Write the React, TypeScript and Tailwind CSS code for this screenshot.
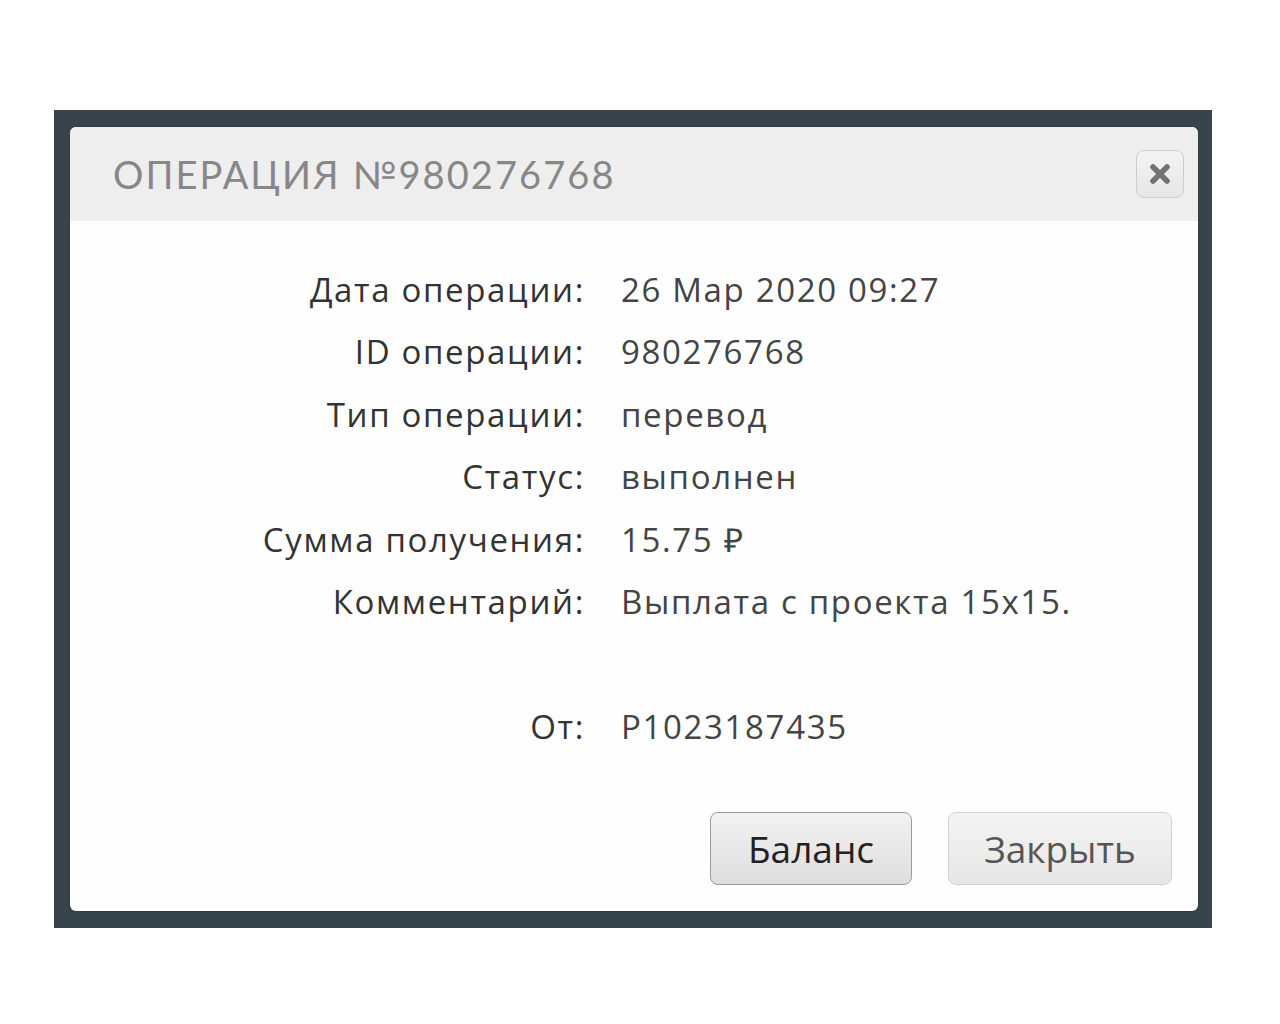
import React from "react";

const rows: { label: string; value: React.ReactNode }[] = [
  { label: "Дата операции:", value: "26 Мар 2020 09:27" },
  { label: "ID операции:", value: "980276768" },
  { label: "Тип операции:", value: "перевод" },
  { label: "Статус:", value: "выполнен" },
  { label: "Сумма получения:", value: "15.75 ₽" },
  { label: "Комментарий:", value: "Выплата с проекта 15x15." },
];

function Row({ label, value }: { label: string; value: React.ReactNode }) {
  return (
    <div className="flex h-[62.5px] items-center">
      <div className="w-[515px] shrink-0 text-right text-[#333]">{label}</div>
      <div className="pl-[36px] text-[#444]">{value}</div>
    </div>
  );
}

export default function App() {
  return (
    <div className="min-h-[1024px] bg-white pt-[110px] pl-[54px]">
      <div className="h-[818px] w-[1158px] bg-[#37444b] px-[16px] pt-[17px]">
        <div className="flex h-[784px] w-[1128px] flex-col overflow-hidden rounded-[6px] bg-[#fefefe] shadow-[0_0_2px_rgba(0,0,0,0.3)]">
          {/* header */}
          <div className="flex h-[94px] items-center justify-between bg-[#eeeeee] pl-[43px] pr-[14px]">
            <h2 className="font-['Lato',sans-serif] text-[38px] uppercase tracking-[0.055em] text-[#878787]">
              Операция №980276768
            </h2>
            <button className="flex h-[48px] w-[48px] items-center justify-center rounded-[8px] border border-[#cccccc] bg-gradient-to-b from-[#f4f4f4] to-[#e6e6e6]">
              <svg width="24" height="24" viewBox="0 0 24 24">
                <path d="M5 5 L19 19 M19 5 L5 19" stroke="#727272" strokeWidth="5.5" strokeLinecap="round" />
              </svg>
            </button>
          </div>

          {/* body */}
          <div className="flex-1 pt-[37px] font-['Open_Sans',sans-serif] text-[33px] tracking-[0.05em]">
            {rows.map((r) => (
              <Row key={r.label} label={r.label} value={r.value} />
            ))}
            <div className="h-[62.5px]" />
            <Row label="От:" value="P1023187435" />
          </div>

          {/* footer */}
          <div className="flex justify-end gap-[36px] pr-[26px] pb-[26px] font-['Open_Sans',sans-serif] text-[37px]">
            <button className="h-[73px] w-[202px] rounded-[8px] border border-[#9a9a9a] bg-gradient-to-b from-[#f2f2f2] to-[#dedede] text-[#222]">
              Баланс
            </button>
            <button className="h-[73px] w-[224px] rounded-[8px] border border-[#d0d0d0] bg-gradient-to-b from-[#f4f4f4] to-[#e6e6e6] text-[#555]">
              Закрыть
            </button>
          </div>
        </div>
      </div>
    </div>
  );
}
